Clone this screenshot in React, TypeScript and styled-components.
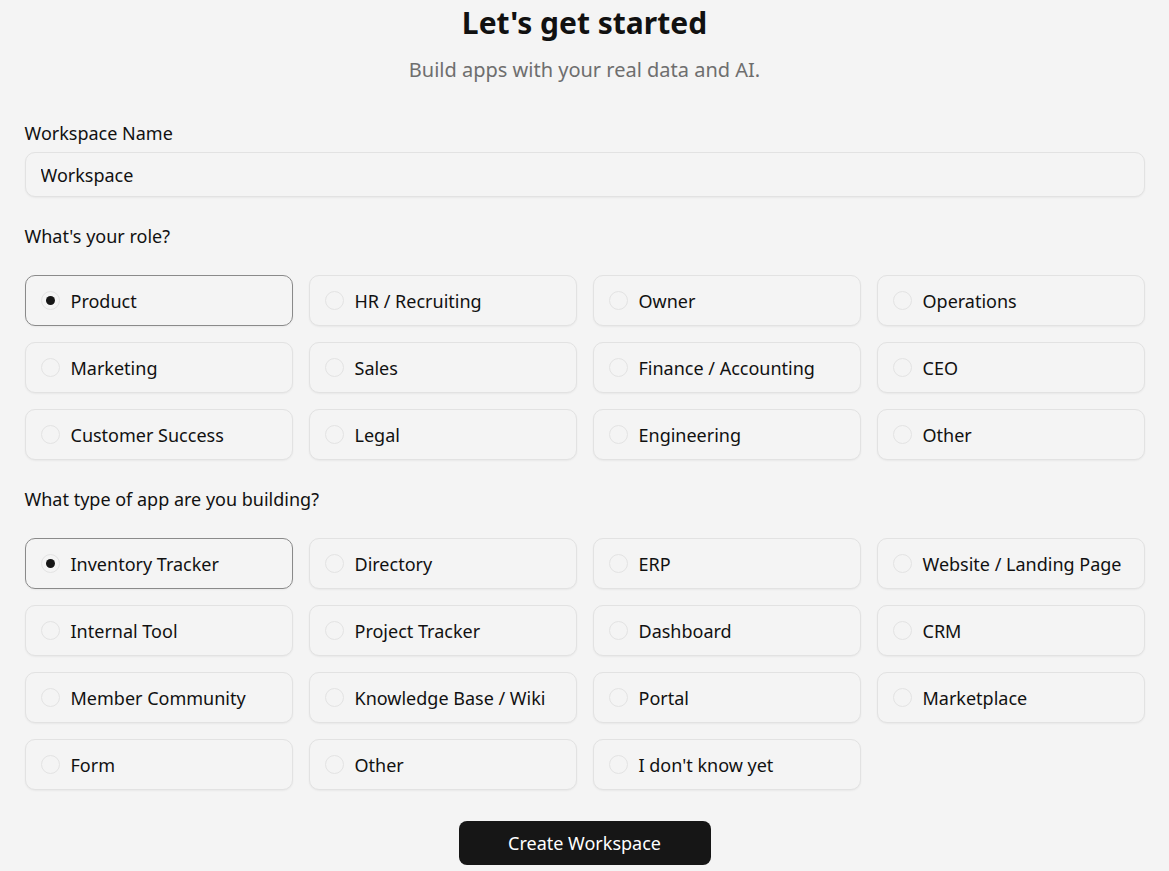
import React, { useState } from 'react';
import styled, { createGlobalStyle, css } from 'styled-components';

const roles = [
  'Product', 'HR / Recruiting', 'Owner', 'Operations',
  'Marketing', 'Sales', 'Finance / Accounting', 'CEO',
  'Customer Success', 'Legal', 'Engineering', 'Other',
];

const appTypes = [
  'Inventory Tracker', 'Directory', 'ERP', 'Website / Landing Page',
  'Internal Tool', 'Project Tracker', 'Dashboard', 'CRM',
  'Member Community', 'Knowledge Base / Wiki', 'Portal', 'Marketplace',
  'Form', 'Other', "I don't know yet",
];

interface IOptionGridProps {
  options: string[];
  selected: number;
  onSelect: (index: number) => void;
}
const OptionGrid: React.FC<IOptionGridProps> = ({ options, selected, onSelect }) => (
  <StyledGrid>
    {options.map((label, i) => (
      <StyledOption key={label + i} active={i === selected} onClick={() => onSelect(i)}>
        <StyledRadio active={i === selected} />
        {label}
      </StyledOption>
    ))}
  </StyledGrid>
);

const App: React.FC = () => {
  const [role, setRole] = useState(0);
  const [appType, setAppType] = useState(0);
  const [name, setName] = useState('Workspace');

  return (
    <>
      <GlobalStyle />
      <StyledPage>
        <StyledHeader>
          <StyledTitle>Let's get started</StyledTitle>
          <StyledSubtitle>Build apps with your real data and AI.</StyledSubtitle>
        </StyledHeader>

        <StyledField>
          <StyledLabel>Workspace Name</StyledLabel>
          <StyledInput value={name} onChange={e => setName(e.target.value)} />
        </StyledField>

        <StyledSection>
          <StyledLabel>What's your role?</StyledLabel>
          <OptionGrid options={roles} selected={role} onSelect={setRole} />
        </StyledSection>

        <StyledSection>
          <StyledLabel>What type of app are you building?</StyledLabel>
          <OptionGrid options={appTypes} selected={appType} onSelect={setAppType} />
        </StyledSection>

        <StyledButton type="button">Create Workspace</StyledButton>
      </StyledPage>
    </>
  );
};
export default App;

const GlobalStyle = createGlobalStyle`
  body {
    margin: 0;
    background: #f4f4f4;
    color: #111111;
    font-family: "Noto Sans", "Open Sans", sans-serif;
  }
`;

const StyledPage = styled.div`
  width: 1120px;
  margin: 0 auto;
  padding-top: 3px;
  display: flex;
  flex-direction: column;
`;

const StyledHeader = styled.div`
  display: flex;
  flex-direction: column;
  align-items: center;
  gap: 13px;
  margin-bottom: 37px;
`;

const StyledTitle = styled.h1`
  margin: 0;
  font-size: 30px;
  line-height: 40px;
  font-weight: 700;
`;

const StyledSubtitle = styled.p`
  margin: 0;
  font-size: 20px;
  line-height: 28px;
  color: #6e6e6e;
`;

const StyledField = styled.div`
  display: flex;
  flex-direction: column;
  gap: 7px;
  margin-bottom: 27px;
`;

const StyledLabel = styled.div`
  font-size: 18px;
  line-height: 24px;
`;

const StyledInput = styled.input`
  box-sizing: border-box;
  height: 45px;
  padding: 0 15px;
  border: 1px solid #e2e2e2;
  border-radius: 10px;
  background: #f4f4f4;
  box-shadow: 0 1px 2px rgba(0, 0, 0, 0.05);
  font: inherit;
  font-size: 18px;
  color: #111111;
  outline: none;
`;

const StyledSection = styled.div`
  display: flex;
  flex-direction: column;
  gap: 27px;
  margin-bottom: 27px;
`;

const StyledGrid = styled.div`
  display: grid;
  grid-template-columns: repeat(4, 1fr);
  gap: 16px;
`;

interface IActiveProps {
  active: boolean;
}

const StyledOption = styled.div<IActiveProps>`
  box-sizing: border-box;
  height: 51px;
  display: flex;
  align-items: center;
  gap: 11px;
  padding: 0 15px;
  border: 1px solid #e2e2e2;
  border-radius: 10px;
  background: #f4f4f4;
  box-shadow: 0 1px 2px rgba(0, 0, 0, 0.05);
  font-size: 18px;
  cursor: pointer;
  white-space: nowrap;

  ${props => props.active && css`
    border-color: #8a8a8a;
  `}
`;

const StyledRadio = styled.span<IActiveProps>`
  position: relative;
  flex-shrink: 0;
  box-sizing: border-box;
  width: 19px;
  height: 19px;
  border: 1px solid #e3e3e3;
  border-radius: 50%;
  background: #f4f4f4;

  ${props => props.active && css`
    &::after {
      content: '';
      position: absolute;
      top: 50%;
      left: 50%;
      width: 9px;
      height: 9px;
      margin: -4.5px 0 0 -4.5px;
      border-radius: 50%;
      background: #161616;
    }
  `}
`;

const StyledButton = styled.button`
  align-self: center;
  width: 252px;
  height: 44px;
  margin-top: 4px;
  border: none;
  border-radius: 8px;
  background: #161616;
  color: #ffffff;
  font: inherit;
  font-size: 18px;
  cursor: pointer;
`;
